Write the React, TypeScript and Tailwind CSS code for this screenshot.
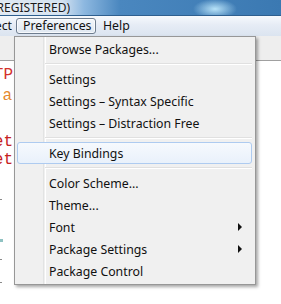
import React from 'react';

const font = "font-['Noto_Sans','Liberation_Sans',sans-serif]";

type Item = { label: string; sub?: boolean; hot?: boolean } | 'sep';

const items: Item[] = [
  { label: 'Browse Packages...' },
  'sep',
  { label: 'Settings' },
  { label: 'Settings – Syntax Specific' },
  { label: 'Settings – Distraction Free' },
  'sep',
  { label: 'Key Bindings', hot: true },
  'sep',
  { label: 'Color Scheme...' },
  { label: 'Theme...' },
  { label: 'Font', sub: true },
  { label: 'Package Settings', sub: true },
  { label: 'Package Control' },
];

const Arrow = () => (
  <svg width="5" height="8" viewBox="0 0 5 8" className="mr-[9px]">
    <polygon points="0,0 4,4 0,8" fill="#111" />
  </svg>
);

function PrefsMenu() {
  return (
    <div className="absolute left-[14px] top-[36px] w-[242px] h-[249px] border border-[#979797] bg-[#f0f0f0] shadow-[2px_2px_3px_rgba(0,0,0,0.35)] py-[1px]">
      {/* icon gutter */}
      <div className="absolute left-[28px] top-0 bottom-0 w-[2px] border-l border-[#e2e3e3] shadow-[1px_0_0_#ffffff]" />
      <div className="relative flex flex-col">
        {items.map((it, i) =>
          it === 'sep' ? (
            <div key={i} className="h-[8px] flex items-center ml-[30px] mr-[3px]">
              <div className="w-full h-[2px] border-t border-[#e0e0e0] border-b border-b-white" />
            </div>
          ) : (
            <div
              key={i}
              className={
                it.hot
                  ? 'h-[22px] ml-[2px] mr-[3px] pl-[31px] flex items-center justify-between rounded-[3px] border border-[#aecbf0] bg-[linear-gradient(180deg,#f6f9fd,#e9f1fb)]'
                  : 'h-[22px] ml-[2px] mr-[3px] pl-[32px] flex items-center justify-between'
              }
            >
              <span className={`${font} mt-[2px] text-[12.3px] text-[#111] leading-none`}>{it.label}</span>
              {it.sub && <Arrow />}
            </div>
          )
        )}
      </div>
    </div>
  );
}

export default function App() {
  return (
    <div className="relative w-[281px] h-[304px] overflow-hidden bg-white">
      {/* title bar */}
      <div className="h-[16px] flex items-center border-b border-[#2e5f8f] bg-[radial-gradient(ellipse_22px_10px_at_215px_9px,rgba(190,232,252,0.95),transparent),linear-gradient(90deg,#dfe8f2_0px,#d3e1f0_62px,#8db8e0_84px,#4a87bf_120px,#3b79b2_281px)]">
        <div className="w-[70px] flex justify-end overflow-hidden">
          <span className={`${font} text-[12px] text-[#1a1a1a] whitespace-nowrap leading-none [text-shadow:0_0_6px_#fff]`}>
            (UNREGISTERED)
          </span>
        </div>
      </div>

      {/* menu bar */}
      <div className="h-[20px] flex items-center bg-[linear-gradient(180deg,#f6f9fd,#e6ecf5_45%,#dbe4f0)]">
        <div className="w-[12px] flex justify-end overflow-hidden">
          <span className={`${font} mt-[1px] text-[12.3px] text-[#111] leading-none whitespace-nowrap`}>Project</span>
        </div>
        <div className="ml-[4px] h-[16px] w-[80px] flex items-center pl-[6px] rounded-[3px] border border-[#6e7d8f] bg-[linear-gradient(180deg,#f4f7fb,#dfe7f1)] shadow-[inset_0_0_0_1px_rgba(255,255,255,0.7)]">
          <span className={`${font} mt-[1px] text-[12.3px] text-[#111] leading-none`}>Preferences</span>
        </div>
        <span className={`${font} mt-[1px] ml-[7px] text-[12.3px] text-[#111] leading-none`}>Help</span>
      </div>

      {/* editor area */}
      <div className="h-[25px] bg-[#eeeeee] border-b border-[#a0a0a0]" />
      <div className="flex flex-col font-['Liberation_Mono',monospace] text-[16px] leading-none">
        <div className="h-[20px] w-[13px] mt-[4px] flex justify-end items-center overflow-hidden text-[#d3312c] whitespace-pre">TTP</div>
        <div className="h-[22px] w-[12px] flex justify-end items-center overflow-hidden text-[#e58a2e] whitespace-pre">a</div>
        <div className="h-[26px]" />
        <div className="h-[18px] w-[13px] flex justify-end items-center overflow-hidden text-[#c52121] whitespace-pre">et</div>
        <div className="h-[18px] w-[13px] flex justify-end items-center overflow-hidden text-[#c52121] whitespace-pre">et</div>
        <div className="h-[30px]" />
        <div className="w-[2px] h-[1px] bg-[#8a8a8a]" />
        <div className="h-[39px]" />
        <div className="w-[3px] h-[3px] bg-[#8fc2c2]" />
        <div className="h-[17px]" />
        <div className="w-[2px] h-[1px] bg-[#8a8a8a]" />
        <div className="h-[22px]" />
        <div className="w-[2px] h-[1px] bg-[#8a8a8a]" />
      </div>

      <PrefsMenu />
    </div>
  );
}
